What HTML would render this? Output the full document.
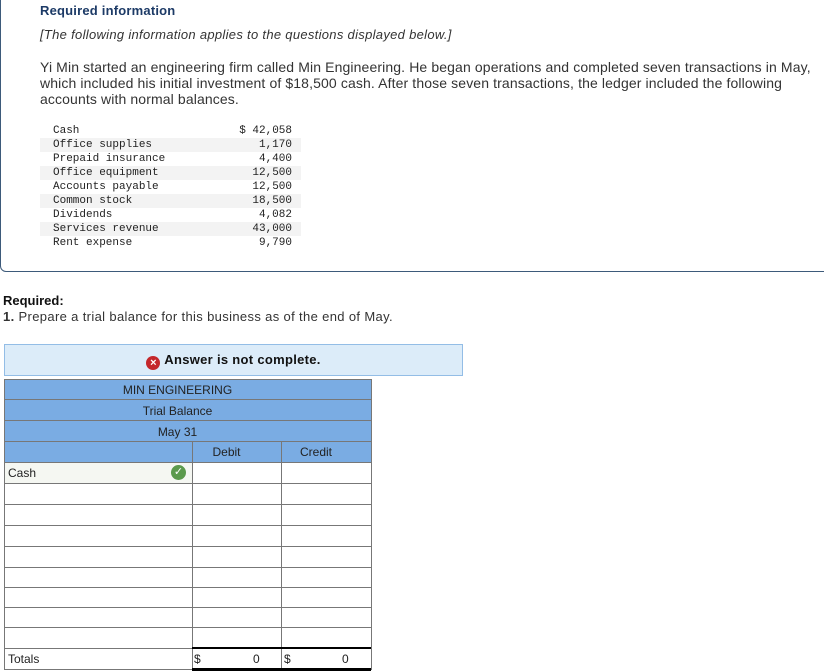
<!DOCTYPE html>
<html><head><style>
body{margin:0;width:824px;height:672px;overflow:hidden;background:#fff;font-family:"Liberation Sans",Arial,sans-serif;color:#222;position:relative}
.a{position:absolute}
.box{left:0;top:-10px;width:840px;height:282px;border:1px solid #3d5a7a;border-radius:6px;box-sizing:border-box}
.mono{font-family:"Liberation Mono",monospace;font-size:11px;line-height:14px}
.hl{position:absolute;left:4px;width:367px;height:1px;background:#777}
.vl{position:absolute;width:1px;background:#777}
.hd{position:absolute;left:4px;width:367px;background:#7aace3;font-size:12px;text-align:center;color:#222}
</style></head><body>
<div class="a box"></div>
<div class="a" style="left:40px;top:3px;font-size:13px;font-weight:bold;color:#1c3a66;letter-spacing:0.2px">Required information</div>
<div class="a" style="left:40px;top:27px;font-size:13px;font-style:italic;color:#333;letter-spacing:0.3px">[The following information applies to the questions displayed below.]</div>
<div class="a" style="left:40px;top:59px;width:780px;font-size:14px;line-height:16px;color:#333;letter-spacing:0.12px">Yi Min started an engineering firm called Min Engineering. He began operations and completed seven transactions in May, which included his initial investment of $18,500 cash. After those seven transactions, the ledger included the following accounts with normal balances.</div>
<div class="a mono" style="left:40px;top:124px;width:261px;color:#222">
<div style="padding-left:13px;height:14px;position:relative">Cash<span style="position:absolute;right:9px">$ 42,058</span></div>
<div style="padding-left:13px;height:14px;position:relative;background:#f3f3f3">Office supplies<span style="position:absolute;right:9px">1,170</span></div>
<div style="padding-left:13px;height:14px;position:relative">Prepaid insurance<span style="position:absolute;right:9px">4,400</span></div>
<div style="padding-left:13px;height:14px;position:relative;background:#f3f3f3">Office equipment<span style="position:absolute;right:9px">12,500</span></div>
<div style="padding-left:13px;height:14px;position:relative">Accounts payable<span style="position:absolute;right:9px">12,500</span></div>
<div style="padding-left:13px;height:14px;position:relative;background:#f3f3f3">Common stock<span style="position:absolute;right:9px">18,500</span></div>
<div style="padding-left:13px;height:14px;position:relative">Dividends<span style="position:absolute;right:9px">4,082</span></div>
<div style="padding-left:13px;height:14px;position:relative;background:#f3f3f3">Services revenue<span style="position:absolute;right:9px">43,000</span></div>
<div style="padding-left:13px;height:14px;position:relative">Rent expense<span style="position:absolute;right:9px">9,790</span></div>
</div>
<div class="a" style="left:3px;top:293px;font-size:13px;font-weight:bold;color:#111">Required:</div>
<div class="a" style="left:3px;top:309px;font-size:13px;color:#333;letter-spacing:0.35px"><b>1.</b> Prepare a trial balance for this business as of the end of May.</div>
<div class="a" style="left:4px;top:344px;width:459px;height:32px;box-sizing:border-box;background:#dcecf9;border:1px solid #93bde6;text-align:center;font-size:13px;font-weight:bold;line-height:30px;color:#111;letter-spacing:0.3px"><span style="display:inline-block;width:14px;height:14px;border-radius:50%;background:#c4272b;color:#fff;font-size:11px;line-height:14px;vertical-align:-2px;margin-right:4px;letter-spacing:0">×</span>Answer is not complete.</div>
<div class="hd" style="top:379px;height:83px"></div>
<div class="a" style="left:4px;top:383px;width:347px;text-align:center;font-size:12px">MIN ENGINEERING</div>
<div class="a" style="left:4px;top:404px;width:347px;text-align:center;font-size:12px">Trial Balance</div>
<div class="a" style="left:4px;top:425px;width:347px;text-align:center;font-size:12px">May 31</div>
<div class="a" style="left:182px;top:445px;width:89px;text-align:center;font-size:12px">Debit</div>
<div class="a" style="left:271px;top:445px;width:90px;text-align:center;font-size:12px">Credit</div>
<div class="a" style="left:5px;top:463px;width:187px;height:20px;background:#f5f7f2"></div>
<div class="a" style="left:8px;top:466px;font-size:12px">Cash</div>
<div class="a" style="left:171px;top:465px;width:15px;height:15px;border-radius:50%;background:#5b9a4d;color:#fff;font-size:11px;line-height:15px;text-align:center">✓</div>
<div class="hl" style="top:379px"></div><div class="hl" style="top:399px"></div><div class="hl" style="top:420px"></div><div class="hl" style="top:441px"></div><div class="hl" style="top:462px"></div>
<div class="hl" style="top:483px"></div><div class="hl" style="top:504px"></div><div class="hl" style="top:525px"></div><div class="hl" style="top:546px"></div><div class="hl" style="top:567px"></div><div class="hl" style="top:587px"></div><div class="hl" style="top:607px"></div><div class="hl" style="top:627px"></div><div class="hl" style="top:648px"></div><div class="hl" style="top:669px"></div>
<div class="vl" style="left:4px;top:379px;height:291px"></div>
<div class="vl" style="left:371px;top:379px;height:291px"></div>
<div class="vl" style="left:192px;top:441px;height:229px"></div>
<div class="vl" style="left:281px;top:441px;height:229px"></div>
<div class="a" style="left:192px;top:647px;width:179px;height:2px;background:#000"></div>
<div class="a" style="left:192px;top:668px;width:179px;height:3px;background:#000"></div>
<div class="a" style="left:8px;top:652px;font-size:12px">Totals</div>
<div class="a" style="left:194px;top:652px;font-size:12px">$</div>
<div class="a" style="left:253px;top:652px;font-size:12px">0</div>
<div class="a" style="left:284px;top:652px;font-size:12px">$</div>
<div class="a" style="left:342px;top:652px;font-size:12px">0</div>
</body></html>
